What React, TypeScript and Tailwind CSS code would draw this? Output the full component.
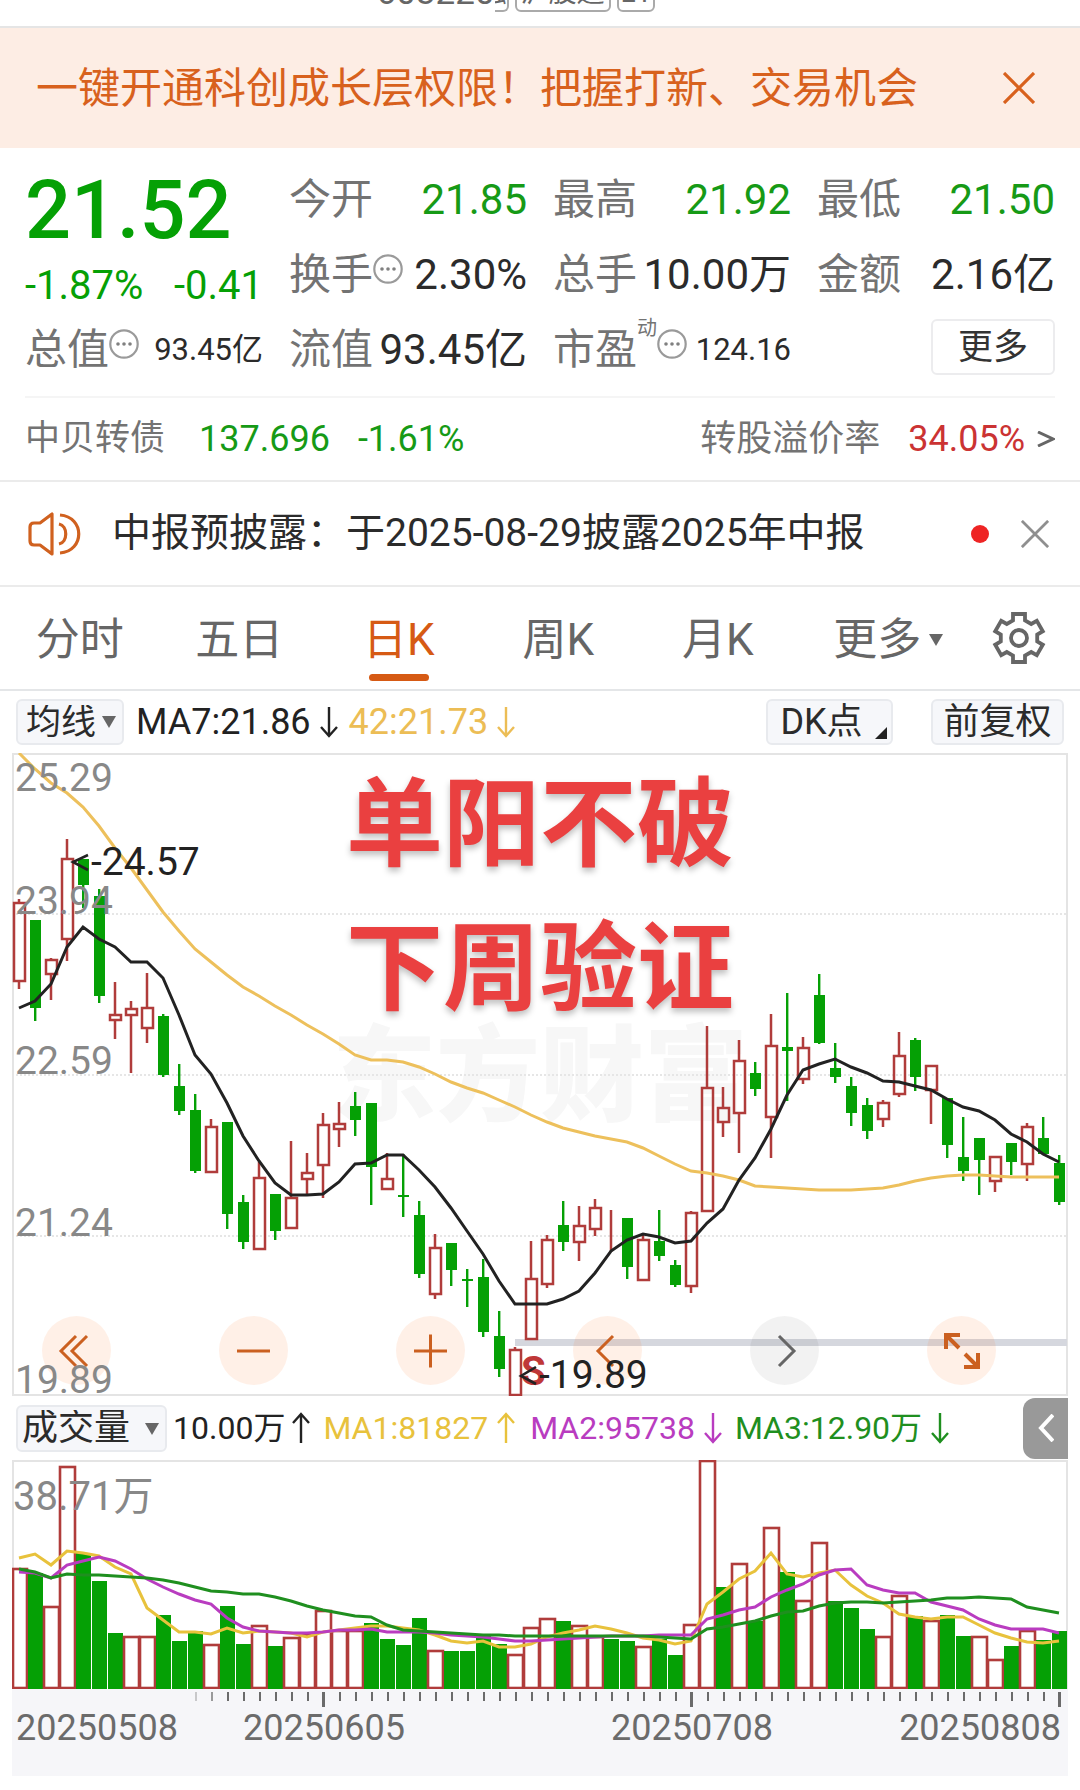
import { useState } from "react";

type Candle = [kind: "r" | "g", high: number, top: number, bottom: number, low: number];
type Volume = [kind: "r" | "g", top: number];

const STEP = 16;
const centerX = (i: number) => 7 + i * STEP;
const toPoints = (ys: number[]) => ys.map((y, i) => `${centerX(i)},${y}`).join(" ");

const candles: Candle[] = [
  ["r", 146, 150, 228, 236], ["g", 167, 167, 255, 268], ["r", 205, 207, 221, 247], ["r", 86, 106, 186, 208],
  ["g", 106, 106, 132, 155], ["g", 136, 143, 243, 250], ["r", 229, 262, 267, 286], ["r", 248, 256, 262, 320],
  ["r", 220, 255, 275, 290], ["g", 261, 263, 322, 324], ["g", 311, 333, 358, 362], ["g", 341, 357, 418, 420],
  ["r", 366, 374, 419, 419], ["g", 369, 369, 461, 476], ["g", 442, 449, 489, 496], ["r", 409, 425, 496, 496],
  ["g", 441, 441, 478, 487], ["r", 388, 445, 475, 475], ["r", 400, 420, 426, 441], ["r", 360, 372, 412, 445],
  ["r", 349, 371, 376, 394], ["g", 339, 353, 367, 383], ["g", 350, 350, 414, 452], ["r", 400, 426, 436, 436],
  ["g", 401, 442, 444, 464], ["g", 448, 462, 521, 525], ["r", 481, 495, 541, 546], ["g", 490, 490, 517, 533],
  ["g", 516, 526, 528, 554], ["g", 506, 524, 579, 584], ["g", 558, 583, 616, 624], ["r", 594, 597, 642, 643],
  ["r", 488, 526, 586, 586], ["r", 482, 487, 531, 535], ["g", 448, 472, 489, 498], ["r", 453, 473, 489, 508],
  ["r", 446, 455, 476, 483], ["r", 457, 463, 463, 499], ["g", 465, 465, 514, 526], ["r", 480, 487, 527, 527],
  ["g", 457, 488, 503, 508], ["g", 507, 512, 532, 534], ["r", 458, 460, 533, 540], ["r", 273, 335, 458, 458],
  ["r", 334, 355, 369, 384], ["r", 287, 308, 360, 400], ["g", 309, 320, 336, 343], ["r", 261, 293, 364, 405],
  ["g", 240, 294, 298, 348], ["r", 284, 295, 326, 331], ["g", 221, 242, 290, 291], ["g", 290, 315, 324, 330],
  ["g", 324, 333, 360, 373], ["g", 345, 352, 378, 386], ["r", 347, 350, 366, 374], ["r", 279, 303, 341, 344],
  ["g", 285, 287, 324, 338], ["r", 313, 313, 337, 371], ["g", 345, 345, 392, 405], ["g", 364, 404, 418, 428],
  ["g", 385, 385, 407, 442], ["r", 404, 404, 428, 439], ["g", 390, 390, 409, 422], ["r", 370, 374, 411, 428],
  ["g", 364, 385, 401, 401], ["g", 402, 410, 449, 452],
];

const ma7 = [
  255, 248, 231, 194, 174, 186, 194, 209, 209, 225, 262, 302, 321, 350, 383, 408, 430, 442, 442, 441, 429, 411,
  410, 402, 402, 417, 434, 455, 478, 501, 528, 551, 551, 551, 546, 538, 520, 498, 487, 481, 484, 490, 488, 470,
  456, 427, 405, 376, 342, 317, 311, 306, 314, 320, 328, 329, 333, 337, 346, 354, 358, 367, 381, 389, 401, 409,
];

const ma42 = [
  0, 16, 30, 40, 54, 73, 95, 115, 137, 159, 178, 196, 209, 222, 234, 243, 253, 262, 272, 281, 291, 302,
  307, 307, 309, 314, 321, 329, 335, 340, 347, 354, 362, 369, 375, 379, 383, 386, 389, 395, 403, 411, 418, 420,
  423, 427, 433, 434, 435, 436, 437, 437, 437, 436, 435, 432, 428, 425, 423, 422, 422, 423, 424, 424, 424, 424,
];

const volumes: Volume[] = [
  ["r", 109], ["g", 113], ["r", 147], ["r", 7], ["g", 93], ["g", 121], ["g", 173], ["r", 177], ["r", 177],
  ["g", 155], ["g", 181], ["g", 171], ["r", 185], ["g", 146], ["g", 184], ["r", 166], ["g", 186], ["r", 178],
  ["r", 175], ["r", 151], ["r", 171], ["r", 171], ["g", 163], ["g", 179], ["g", 185], ["g", 158], ["r", 191],
  ["g", 191], ["g", 191], ["g", 176], ["g", 184], ["r", 195], ["r", 168], ["r", 159], ["g", 161], ["r", 166],
  ["r", 177], ["g", 179], ["g", 181], ["r", 187], ["g", 179], ["g", 195], ["r", 165], ["r", 1], ["g", 127],
  ["r", 104], ["g", 161], ["r", 68], ["g", 112], ["r", 141], ["r", 83], ["g", 141], ["g", 148], ["g", 169],
  ["r", 177], ["r", 136], ["g", 156], ["r", 161], ["g", 155], ["g", 176], ["r", 177], ["r", 200], ["g", 186],
  ["r", 171], ["g", 180], ["g", 171],
];

const volMa1 = [
  98, 94, 105, 91, 93, 96, 107, 114, 148, 160, 172, 172, 174, 168, 173, 171, 172, 173, 177, 172, 170, 168,
  166, 166, 168, 170, 175, 181, 183, 181, 187, 187, 184, 177, 173, 170, 166, 169, 173, 178, 180, 184, 181, 144,
  132, 119, 111, 93, 114, 117, 113, 110, 125, 136, 143, 154, 157, 159, 157, 157, 165, 173, 178, 182, 183, 181,
];

const volMa2 = [
  112, 113, 118, 105, 101, 97, 101, 109, 119, 127, 134, 140, 144, 158, 167, 171, 172, 173, 173, 172, 170, 170,
  169, 172, 172, 172, 173, 175, 176, 177, 179, 181, 181, 180, 179, 178, 177, 176, 176, 176, 175, 175, 175, 159,
  155, 150, 147, 137, 130, 124, 115, 110, 109, 125, 130, 133, 133, 142, 146, 150, 159, 165, 169, 169, 169, 173,
];

const volMa3 = [
  109, 112, 118, 114, 115, 115, 116, 117, 118, 120, 123, 127, 131, 132, 134, 134, 137, 141, 146, 150, 153, 156,
  157, 165, 170, 171, 172, 173, 174, 175, 175, 176, 176, 176, 176, 176, 176, 176, 176, 176, 177, 178, 179, 169,
  167, 164, 161, 156, 152, 151, 146, 143, 142, 142, 143, 142, 141, 140, 138, 138, 137, 138, 139, 147, 150, 153,
];

const priceLabels = [
  { text: "25.29", y: 38 },
  { text: "23.94", y: 161 },
  { text: "22.59", y: 321 },
  { text: "21.24", y: 483 },
  { text: "19.89", y: 640 },
];

const RED = "#b03c3b";
const GREEN = "#05a005";

function MoreDots() {
  return (
    <svg className="mb-3 size-[30px] shrink-0" viewBox="0 0 30 30" fill="none">
      <circle cx="15" cy="15" r="13.700" stroke="#9a9a9a" strokeWidth="2.200" />
      <g fill="#808080">
        <circle cx="9" cy="15" r="1.800" />
        <circle cx="15" cy="15" r="1.800" />
        <circle cx="21" cy="15" r="1.800" />
      </g>
    </svg>
  );
}

function CloseIcon({ className }: { className: string }) {
  return (
    <svg className={className} viewBox="0 0 32 32" fill="none" stroke="currentColor" strokeWidth="3.200">
      <path d="M1 1 31 31M31 1 1 31" />
    </svg>
  );
}

function GearIcon() {
  return (
    <svg className="size-[54px]" viewBox="-27 -27 54 54" fill="none" stroke="#666" strokeWidth="3.800">
      <path d="M-6-17.500V-24H6v6.500L12.200-14 17.800-17.200 23.800-6.800 18.200-3.500V3.500L23.800 6.800 17.800 17.200 12.200 14 6 17.500V24H-6V17.500L-12.200 14-17.800 17.200-23.800 6.800-18.200 3.500V-3.500L-23.800-6.800-17.800-17.200-12.200-14z" />
      <circle r="8" />
    </svg>
  );
}

function Arrow({ up }: { up?: boolean }) {
  return (
    <svg className="h-8 w-5 shrink-0" viewBox="0 0 20 32" fill="none" stroke="currentColor" strokeWidth="2.400">
      {up ? <path d="M10 31V2M2 11l8-9 8 9" /> : <path d="M10 1v29M2 21l8 9 8-9" />}
    </svg>
  );
}

function Caret({ className }: { className: string }) {
  return (
    <svg className={className} viewBox="0 0 14 12" fill="#666">
      <path d="M0 0h14L7 12z" />
    </svg>
  );
}

function Stat({ label, value, green, info, small }: {
  label: string;
  value: string;
  green?: boolean;
  info?: boolean;
  small?: boolean;
}) {
  return (
    <div className="flex h-[74px] items-center justify-between whitespace-nowrap">
      <span className="flex items-center text-[42px] leading-[48px] text-[#737373]">
        {label}
        {info && <MoreDots />}
      </span>
      <span
        className={`${small ? "text-[31px]" : "text-[42px]"} leading-[48px] ${green ? "text-[#169a16]" : "text-[#2b2b2b]"}`}
      >
        {value}
      </span>
    </div>
  );
}

function QuotePanel() {
  return (
    <section className="px-[25px]">
      <div className="grid grid-cols-4 gap-x-[26px] border-b-2 border-[#f5f5f5] pt-[15px] pb-[9px]">
        <div className="row-span-2 whitespace-nowrap text-[#05a005]">
          <div className="h-24 text-[81px] leading-[96px] font-medium">21.52</div>
          <div className="flex justify-between text-[40px] leading-[54px]">
            <span>-1.87%</span>
            <span>-0.41</span>
          </div>
        </div>
        <Stat label="今开" value="21.85" green />
        <Stat label="最高" value="21.92" green />
        <Stat label="最低" value="21.50" green />
        <Stat label="换手" value="2.30%" info />
        <Stat label="总手" value="10.00万" />
        <Stat label="金额" value="2.16亿" />
        <Stat label="总值" value="93.45亿" info small />
        <Stat label="流值" value="93.45亿" />
        <div className="flex h-[74px] items-center justify-between whitespace-nowrap">
          <span className="flex items-center text-[42px] leading-[48px] text-[#737373]">
            市盈
            <sup className="-top-2 self-start text-[20px] leading-none">动</sup>
            <MoreDots />
          </span>
          <span className="text-[31px] leading-[48px] text-[#2b2b2b]">124.16</span>
        </div>
        <div className="flex h-[74px] items-center justify-end pb-1.5">
          <button className="h-14 w-[124px] rounded-md border-2 border-[#ececee] text-[35px] leading-none text-[#333]">
            更多
          </button>
        </div>
      </div>
      <a href="#bond" className="flex h-[82px] items-center text-[36px] whitespace-nowrap text-[#737373]">
        <span className="text-[35px]">中贝转债</span>
        <span className="ml-[34px] text-[#169a16]">137.696</span>
        <span className="ml-7 text-[#169a16]">-1.61%</span>
        <span className="ml-auto">转股溢价率</span>
        <span className="ml-7 text-[#cb3333]">34.05%</span>
        <svg className="ml-3 h-4 w-[18px]" viewBox="0 0 18 16" fill="none" stroke="#666" strokeWidth="3">
          <path d="m1 1 15 7-15 7" />
        </svg>
      </a>
    </section>
  );
}

function Notice() {
  return (
    <section className="flex h-[107px] items-center border-y-2 border-[#ebebeb] pr-[31px] pl-7 whitespace-nowrap">
      <svg className="h-11 w-[54px]" viewBox="0 0 54 44" fill="none" stroke="#d0611f" strokeWidth="3.200" strokeLinejoin="round">
        <path d="M24 2v40l-12-9H6q-4 0-4-4V15q0-4 4-4h6z" />
        <path d="M31 12c9 2 9 18 0 20" />
        <path d="M32 3c25 2 25 36 0 38" />
      </svg>
      <p className="ml-[30px] text-[39px] text-[#2b2b2b]">中报预披露：于2025-08-29披露2025年中报</p>
      <span className="ml-auto size-[18px] rounded-full bg-[#ee2424]" />
      <button className="ml-8 text-[#8f8f8f]" aria-label="关闭公告">
        <CloseIcon className="size-7" />
      </button>
    </section>
  );
}

function PeriodTabs() {
  const [active, setActive] = useState("日K");
  return (
    <nav className="flex h-[104px] items-stretch border-b-2 border-[#e4e6e8]">
      {["分时", "五日", "日K", "周K", "月K", "更多"].map((tab) => (
        <button
          key={tab}
          onClick={() => setActive(tab)}
          className={`relative flex flex-1 items-center justify-center pt-1 text-[44px] ${active === tab ? "text-[#d65a14]" : "text-[#666]"}`}
        >
          <span className="relative">
            {tab}
            {tab === "更多" && <Caret className="absolute top-1/2 left-full ml-2 h-3 w-[14px] -translate-y-1/2" />}
          </span>
          {active === tab && <span className="absolute bottom-2 h-[7px] w-[60px] rounded-sm bg-[#d65a14]" />}
        </button>
      ))}
      <button className="flex w-[123px] items-center justify-center" aria-label="设置">
        <GearIcon />
      </button>
    </nav>
  );
}

function ChartTools() {
  return (
    <div className="flex h-[62px] items-center px-4 text-[36px] whitespace-nowrap">
      <label className="relative">
        <span className="sr-only">指标</span>
        <select className="block h-[46px] w-[108px] appearance-none rounded-md border-2 border-[#e8eaee] bg-[#f6f7fa] pl-2 text-[35px] leading-none text-[#2b2b2b]">
          <option>均线</option>
        </select>
        <Caret className="pointer-events-none absolute top-[17px] right-2 h-3 w-[14px]" />
      </label>
      <span className="ml-3 flex items-center gap-2 text-[#222]">
        MA7:21.86 <Arrow />
      </span>
      <span className="ml-2.5 flex items-center gap-2 text-[#ecbd55]">
        42:21.73 <Arrow />
      </span>
      <button className="relative ml-auto h-[46px] w-[127px] rounded-md border-2 border-[#e8eaee] bg-[#f6f7fa] pr-4 leading-none text-[#2b2b2b]">
        DK点
        <svg className="absolute right-1 bottom-1 size-3" viewBox="0 0 12 12" fill="#222">
          <path d="M12 0v12H0z" />
        </svg>
      </button>
      <button className="ml-[38px] h-[46px] w-[133px] rounded-md border-2 border-[#e8eaee] bg-[#f6f7fa] leading-none text-[#2b2b2b]">
        前复权
      </button>
    </div>
  );
}

const chartButtons = [
  { label: "最左", d: "m34 20-15 15 15 15M45 20 30 35l15 15", gray: false },
  { label: "缩小", d: "M18 35h33", gray: false },
  { label: "放大", d: "M18 35h33M34.500 18.500v33", gray: false },
  { label: "左移", d: "M40 20 25 35l15 15", gray: false },
  { label: "右移", d: "m29 20 15 15-15 15", gray: true },
  { label: "全屏", d: "M32 32 19 19M19 33V19h14M38 38l13 13M37 51h14V37", gray: false },
];

function PriceChart() {
  return (
    <div className="relative mx-3">
      <svg className="block w-full" viewBox="0 0 1056 643" fill="none">
        <text x="528" y="360" textAnchor="middle" fontSize="104" fontWeight="900" fill="#f7f7f7">
          东方财富
        </text>
        <g stroke="#e6e6e6" strokeWidth="2" strokeDasharray="2 2">
          <path d="M0 161h1055M0 322h1055M0 483h1055" />
        </g>
        <path d="M1 643V1h1054v642" stroke="#e4e4e4" strokeWidth="2" />
        <path d="M0 642h1056" stroke="#e4e4e4" strokeWidth="2" />
        <path d="M503 589.500h552" stroke="#d5d7de" strokeWidth="7" />
        {candles.map(([kind, high, top, bottom, low], i) => {
          const x = centerX(i);
          if (kind === "g") {
            return (
              <g key={i} fill={GREEN}>
                <rect x={x - 1} y={high} width="2.400" height={low - high} />
                <rect x={x - 5} y={top} width="11" height={bottom - top} />
              </g>
            );
          }
          return (
            <g key={i} stroke={RED} strokeWidth="2.500">
              <path d={`M${x} ${high}V${top}M${x} ${bottom}V${low}`} />
              <rect x={x - 5} y={top} width="11" height={bottom - top} />
            </g>
          );
        })}
        <polyline points={toPoints(ma42)} stroke="#edc05c" strokeWidth="3" />
        <polyline points={toPoints(ma7)} stroke="#222" strokeWidth="3" />
      </svg>

      <div className="absolute inset-x-0 top-0 text-center text-[97px] leading-[144px] font-bold text-[#ea4040] text-shadow-[0_4px_6px_rgb(0_0_0_/_0.25)]">
        <p>单阳不破</p>
        <p>下周验证</p>
      </div>

      <div className="absolute bottom-[11px] left-[30px] flex gap-[108px]">
        {chartButtons.map(({ label, d, gray }) => (
          <button
            key={label}
            aria-label={label}
            className={`size-[69px] rounded-full ${gray ? "bg-black/5 text-[#666]" : "bg-[#ff6a13]/10 text-[#cb6020]"}`}
          >
            <svg viewBox="0 0 69 69" fill="none" stroke="currentColor" strokeWidth={label === "全屏" ? 4 : 3}>
              <path d={d} />
            </svg>
          </button>
        ))}
      </div>

      {/* axis values and high/low markers stay above the round buttons */}
      <svg className="pointer-events-none absolute inset-0 size-full" viewBox="0 0 1056 643" fontSize="39">
        <g fill="#888">
          {priceLabels.map(({ text, y }) => (
            <text key={text} x="3" y={y}>{text}</text>
          ))}
        </g>
        <text x="509" y="632" fontSize="40" fontWeight="700" fill="#bf3838">S</text>
        <g fill="none" stroke="#222" strokeWidth="2.600">
          <path d="m76 102-15 7 15 8M524 614l-15 9 15 8" />
        </g>
        <g fill="#222">
          <text x="79" y="122">-24.57</text>
          <text x="527" y="635">-19.89</text>
        </g>
      </svg>
    </div>
  );
}

function VolumeHeader() {
  return (
    <div className="flex h-16 items-center pr-3 pl-4 text-[32px] whitespace-nowrap">
      <label className="relative">
        <span className="sr-only">副图指标</span>
        <select className="block h-[47px] w-[151px] appearance-none rounded-md border-2 border-[#e8eaee] bg-[#f6f7fa] pl-1 text-[36px] leading-none text-[#2b2b2b]">
          <option>成交量</option>
        </select>
        <Caret className="pointer-events-none absolute top-[18px] right-2 h-3 w-[14px]" />
      </label>
      <span className="ml-1.5 flex items-center gap-1.5 text-[#222]">
        10.00万 <Arrow up />
      </span>
      <span className="ml-3 flex items-center gap-2 text-[#e8c23c]">
        MA1:81827 <Arrow up />
      </span>
      <span className="ml-3.5 flex items-center gap-2 text-[#b93cc0]">
        MA2:95738 <Arrow />
      </span>
      <span className="ml-3 flex items-center gap-2 text-[#1f8f1f]">
        MA3:12.90万 <Arrow />
      </span>
      <button className="ml-auto flex h-[61px] w-[45px] items-center justify-center rounded-l-xl bg-[#999]" aria-label="展开">
        <svg className="h-7 w-4" viewBox="0 0 16 28" fill="none" stroke="#fff" strokeWidth="4">
          <path d="M15 1 3 14l12 13" />
        </svg>
      </button>
    </div>
  );
}

function VolumeChart() {
  return (
    <div className="mx-3 bg-[#f6f6f9]">
      <svg className="block w-full bg-white" viewBox="0 0 1056 229" fill="none">
        <path d="M1 229V1h1054v228" stroke="#e4e4e4" strokeWidth="2" />
        {volumes.map(([kind, top], i) => {
          const x = Math.max(centerX(i) - 8, 0);
          const right = centerX(i) + 8;
          return kind === "g" ? (
            <rect key={i} x={x + 1} y={top} width={right - x - 1} height={229 - top} fill={GREEN} />
          ) : (
            <rect key={i} x={x + 1} y={top} width={right - x - 1} height={228 - top} fill="#fff" stroke={RED} strokeWidth="2.600" />
          );
        })}
        <g strokeWidth="3">
          <polyline points={toPoints(volMa1)} stroke="#e8c23c" />
          <polyline points={toPoints(volMa2)} stroke="#b93cc0" />
          <polyline points={toPoints(volMa3)} stroke="#1f8f1f" />
        </g>
        <text x="1" y="50" fontSize="40" fill="#888">38.71万</text>
      </svg>
      <svg className="block w-full" viewBox="0 0 1056 87" fontSize="36" fill="#6b6b6b">
        {volumes.map((_, i) => {
          if (i < 11) return null;
          const major = i === 19 || i === 42 || i === 65;
          // the first few ticks fade in
          const opacity = i < 13 ? (i - 10) / 3 : 1;
          return (
            <rect
              key={i}
              x={centerX(i) - (major ? 1 : 0)}
              y="3"
              width={major ? 3 : 2}
              height={major ? 15 : 9}
              opacity={opacity}
            />
          );
        })}
        <text x="4" y="51">20250508</text>
        <text x="312" y="51" textAnchor="middle">20250605</text>
        <text x="680" y="51" textAnchor="middle">20250708</text>
        <text x="1049" y="51" textAnchor="end">20250808</text>
      </svg>
    </div>
  );
}

export default function App() {
  const [showBanner, setShowBanner] = useState(true);

  return (
    <main className="w-full bg-white pb-3 font-['Roboto','Noto_Sans_CJK_SC',sans-serif]">
      {/* lower edge of the scrolled stock header */}
      <header className="flex h-7 items-end justify-center gap-1.5 overflow-hidden border-b-2 border-[#e5e5e5] pr-12 pb-3.5 text-[#666]">
        <div className="flex items-end">
          <span className="text-[35px] leading-[38px]">603220</span>
          <span className="flex w-3.5 justify-end overflow-hidden rounded-r-md border-r-2 border-b-2 border-[#aaa] text-[28px] leading-[34px]">
            融
          </span>
        </div>
        <span className="rounded-md border-2 border-[#aaa] px-1 text-[28px] leading-[34px]">沪股通</span>
        <span className="rounded-md border-2 border-[#aaa] px-0.5 text-[28px] leading-[34px]">L1</span>
      </header>

      {showBanner && (
        <div className="flex h-[120px] items-center justify-between bg-[#fdede4] pr-[45px] pl-9 text-[#d8611d]">
          <a href="#permission" className="text-[42px] whitespace-nowrap">一键开通科创成长层权限！把握打新、交易机会</a>
          <button onClick={() => setShowBanner(false)} aria-label="关闭">
            <CloseIcon className="size-8" />
          </button>
        </div>
      )}

      <QuotePanel />
      <Notice />
      <PeriodTabs />
      <ChartTools />
      <PriceChart />
      <VolumeHeader />
      <VolumeChart />
    </main>
  );
}
